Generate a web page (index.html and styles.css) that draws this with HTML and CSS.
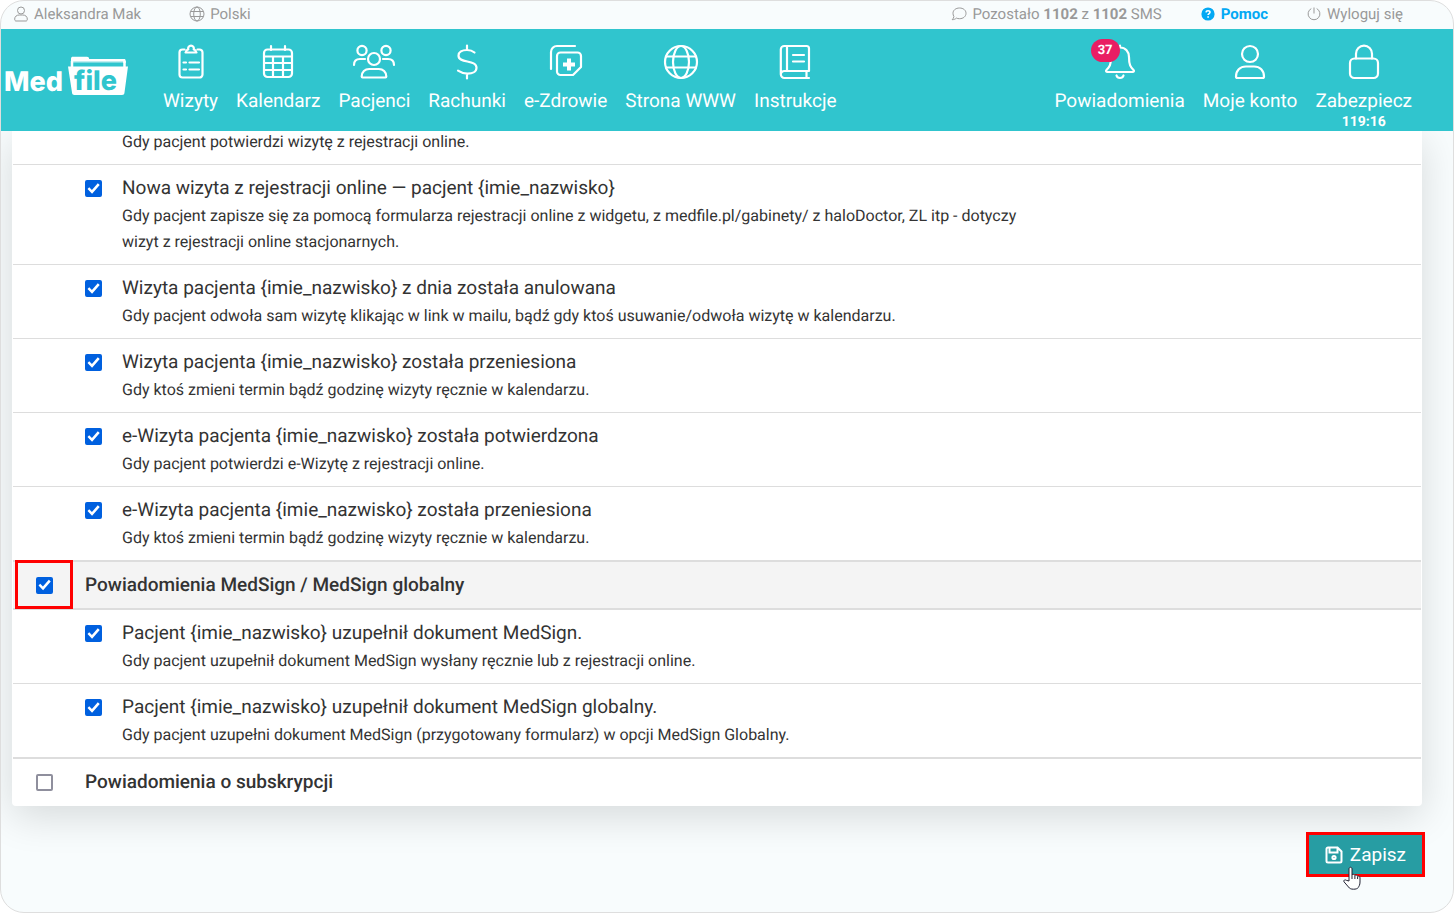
FILE: index.html
```
<!DOCTYPE html>
<html lang="pl">
<head>
<meta charset="utf-8">
<title>MedFile – Powiadomienia</title>
<link rel="stylesheet" href="styles.css">
</head>
<body>
<div class="app">
  <div class="topbar">
    <a class="topbar-link" href="#">
      <svg class="icon-sm" viewBox="0 0 16 16"><circle cx="8" cy="4.500" r="3.500"/><path d="M1.700 13c0-2.500 2-4 4.500-4h3.600c2.500 0 4.500 1.500 4.500 4 0 1.300-.4 2-1.300 2H3c-.9 0-1.300-.7-1.300-2z"/></svg>
      <span>Aleksandra Mak</span>
    </a>
    <a class="topbar-link topbar-lang" href="#">
      <svg class="icon-sm" viewBox="0 0 16 16"><circle cx="8" cy="8" r="7"/><ellipse cx="8" cy="8" rx="3.300" ry="7"/><path d="M1.600 5.500h12.800M1.600 10.500h12.800"/></svg>
      <span>Polski</span>
    </a>
    <div class="topbar-right">
      <span class="topbar-link">
        <svg class="icon-sm" viewBox="0 0 16 16"><path d="M8.500 2C12.300 2 15 4.200 15 7.300s-2.700 5.400-6.500 5.400c-1.200 0-2.200-.2-3.100-.6-.9.800-2.300 1.600-4.200 1.600.9-.9 1.500-2 1.700-3.100C2.300 9.600 2 8.500 2 7.300 2 4.200 4.700 2 8.500 2z"/></svg>
        <span>Pozostało <b>1102</b> z <b>1102</b> SMS</span>
      </span>
      <a class="topbar-link topbar-help" href="#">
        <svg class="icon-sm" viewBox="0 0 16 16"><circle class="help-disc" cx="8" cy="8" r="6.600"/><path class="help-mark" d="M6 6.400c.1-1.200 1-1.700 2-1.700s2 .6 2 1.600c0 1.300-1.900 1.200-1.900 2.600M8.100 10.300v1.500"/></svg>
        <span>Pomoc</span>
      </a>
      <a class="topbar-link" href="#">
        <svg class="icon-sm" viewBox="0 0 16 16"><path d="M8 1.500v6M5.300 2.600a5.900 5.900 0 1 0 5.400 0"/></svg>
        <span>Wyloguj się</span>
      </a>
    </div>
  </div>

  <header class="header">
    <a class="logo" href="#" aria-label="MedFile">
      <svg class="logo-art" width="124" height="40" viewBox="0 0 124 40">
        <text class="logo-med" x="0" y="35">Med</text>
        <path class="logo-folder" d="M64 10.500h60l-3.500 26c-.2 1.800-1 2.500-2.500 2.500H70.500c-1.500 0-2.300-.7-2.500-2.500z"/>
        <path class="logo-tab" d="M68 11V5M120.500 11V5"/>
        <path class="logo-rim" d="M67.500 5.500h53.500"/>
        <path class="logo-folder" d="M67 7V3c0-1.700.7-2.300 2-2.300h14c1.300 0 2 .7 2.200 2.300H120c1.200 0 1.700.5 1.700 1.700V7h-2.200V5H69v2z"/>
        <text class="logo-file" x="70" y="34">file</text>
      </svg>
    </a>
    <nav class="nav">
      <a class="nav-item" href="#">
        <svg class="icon" viewBox="0 0 36 36"><path d="M11.500 5.500H9.500a3 3 0 0 0-3 3v22a3 3 0 0 0 3 3h17a3 3 0 0 0 3-3v-22a3 3 0 0 0-3-3h-2M12.500 8.500h11M13 8.500c0-2 1-2.800 2.300-3a2.900 2.900 0 1 1 5.400 0c1.300.2 2.300 1 2.300 3M16.500 18.500h9.500M16.500 25.500h9.500M10.500 18.500h2.500M10.500 25.500h2.500"/></svg>
        <span>Wizyty</span>
      </a>
      <a class="nav-item" href="#">
        <svg class="icon" viewBox="0 0 36 36"><rect x="4" y="5.500" width="28" height="27.500" rx="3.500"/><path d="M4 12.500h28M11 2v4M25 2v4M4 19h28M4 26h28M13 12.500V33M23 12.500V33"/></svg>
        <span>Kalendarz</span>
      </a>
      <a class="nav-item" href="#">
        <svg class="icon icon-wide" viewBox="0 0 44 36"><circle cx="10" cy="6.500" r="4.600"/><circle cx="34" cy="6.500" r="4.600"/><circle cx="22" cy="15" r="6"/><path d="M10.500 33.500c-.6 0-.8-.3-.8-1 0-4.500 3.300-7.500 7.500-7.500h9.600c4.200 0 7.500 3 7.500 7.500 0 .7-.2 1-.8 1zM2 21c0-4 2-6 6-6h5M42 21c0-4-2-6-6-6h-5"/></svg>
        <span>Pacjenci</span>
      </a>
      <a class="nav-item" href="#">
        <svg class="icon" viewBox="0 0 36 36"><path d="M18 1.500V6M18 29.500v5M25.500 8.500C23.500 6.800 21 6 18 6c-5 0-8.500 2.200-8.500 5.700 0 8 18 3.600 18 12 0 3.800-3.800 6-9 6-3.500 0-6.500-1-9.500-3"/></svg>
        <span>Rachunki</span>
      </a>
      <a class="nav-item" href="#">
        <svg class="icon" viewBox="0 0 36 36"><path d="M3 25V8a6 6 0 0 1 6-6h18M12.500 8.500h17a3.500 3.500 0 0 1 3.500 3.500v11l-8 8H12.500A3.500 3.500 0 0 1 9 27.500V12a3.500 3.500 0 0 1 3.500-3.500z"/><path class="cross" d="M21 14.500v12M15 20.500h12"/></svg>
        <span>e-Zdrowie</span>
      </a>
      <a class="nav-item" href="#">
        <svg class="icon" viewBox="0 0 36 36"><circle cx="18" cy="18" r="16"/><ellipse cx="18" cy="18" rx="8" ry="16"/><path d="M3 12.500h30M3 23.500h30"/></svg>
        <span>Strona WWW</span>
      </a>
      <a class="nav-item" href="#">
        <svg class="icon" viewBox="0 0 36 36"><path d="M32 34H7.500a3.700 3.700 0 0 1-3.700-3.700V5.500A3.500 3.500 0 0 1 7.300 2H29.500A2.500 2.500 0 0 1 32 4.500V27H7.500a3.500 3.500 0 0 0-3.700 3.500M29.500 27v7M10 2v25M16 11h11M16 17.500h11"/></svg>
        <span>Instrukcje</span>
      </a>
    </nav>
    <nav class="nav nav-right">
      <a class="nav-item" href="#">
        <span class="bell">
          <svg class="icon" viewBox="0 0 36 36"><path d="M18 1.500v2M18 3.500c-5.500 0-9 4-9 9.500 0 8-1.500 10-4.500 13-.9 1-.5 2 1 2h25c1.500 0 1.900-1 1-2-3-3-4.500-5-4.500-13 0-5.500-3.500-9.500-9-9.500zM14.500 31.500c.5 1.700 1.900 2.500 3.500 2.500s3-.8 3.500-2.500"/></svg>
          <span class="badge">37</span>
        </span>
        <span>Powiadomienia</span>
      </a>
      <a class="nav-item" href="#">
        <svg class="icon" viewBox="0 0 36 36"><circle cx="18" cy="10" r="8"/><path d="M5.500 34c-1 0-1.500-.5-1.500-1.500C4 26.500 8 22.500 14 22.500h8c6 0 10 4 10 10 0 1-.5 1.500-1.500 1.500z"/></svg>
        <span>Moje konto</span>
      </a>
      <a class="nav-item" href="#">
        <svg class="icon" viewBox="0 0 36 36"><rect x="4" y="14.500" width="28" height="19.500" rx="4.500"/><path d="M10 14.500V9.700a8 8 0 0 1 16 0v4.800"/></svg>
        <span>Zabezpiecz</span>
        <b class="timer">119:16</b>
      </a>
    </nav>
  </header>

  <main class="content">
    <form class="form">
      <div class="card">
        <div class="row row-cut">
          <p class="desc">Gdy pacjent potwierdzi wizytę z rejestracji online.</p>
        </div>
        <div class="row">
          <input class="check" type="checkbox" id="n1" checked>
          <div class="row-text">
            <label class="title" for="n1">Nowa wizyta z rejestracji online — pacjent {imie_nazwisko}</label>
            <p class="desc">Gdy pacjent zapisze się za pomocą formularza rejestracji online z widgetu, z medfile.pl/gabinety/ z haloDoctor, ZL itp - dotyczy wizyt z rejestracji online stacjonarnych.</p>
          </div>
        </div>
        <div class="row">
          <input class="check" type="checkbox" id="n2" checked>
          <div class="row-text">
            <label class="title" for="n2">Wizyta pacjenta {imie_nazwisko} z dnia została anulowana</label>
            <p class="desc">Gdy pacjent odwoła sam wizytę klikając w link w mailu, bądź gdy ktoś usuwanie/odwoła wizytę w kalendarzu.</p>
          </div>
        </div>
        <div class="row">
          <input class="check" type="checkbox" id="n3" checked>
          <div class="row-text">
            <label class="title" for="n3">Wizyta pacjenta {imie_nazwisko} została przeniesiona</label>
            <p class="desc">Gdy ktoś zmieni termin bądź godzinę wizyty ręcznie w kalendarzu.</p>
          </div>
        </div>
        <div class="row">
          <input class="check" type="checkbox" id="n4" checked>
          <div class="row-text">
            <label class="title" for="n4">e-Wizyta pacjenta {imie_nazwisko} została potwierdzona</label>
            <p class="desc">Gdy pacjent potwierdzi e-Wizytę z rejestracji online.</p>
          </div>
        </div>
        <div class="row">
          <input class="check" type="checkbox" id="n5" checked>
          <div class="row-text">
            <label class="title" for="n5">e-Wizyta pacjenta {imie_nazwisko} została przeniesiona</label>
            <p class="desc">Gdy ktoś zmieni termin bądź godzinę wizyty ręcznie w kalendarzu.</p>
          </div>
        </div>
        <div class="group group-active">
          <input class="check" type="checkbox" id="g1" checked>
          <label class="group-title" for="g1">Powiadomienia MedSign / MedSign globalny</label>
          <span class="marker"></span>
        </div>
        <div class="row row-first">
          <input class="check" type="checkbox" id="n6" checked>
          <div class="row-text">
            <label class="title" for="n6">Pacjent {imie_nazwisko} uzupełnił dokument MedSign.</label>
            <p class="desc">Gdy pacjent uzupełnił dokument MedSign wysłany ręcznie lub z rejestracji online.</p>
          </div>
        </div>
        <div class="row">
          <input class="check" type="checkbox" id="n7" checked>
          <div class="row-text">
            <label class="title" for="n7">Pacjent {imie_nazwisko} uzupełnił dokument MedSign globalny.</label>
            <p class="desc">Gdy pacjent uzupełni dokument MedSign (przygotowany formularz) w opcji MedSign Globalny.</p>
          </div>
        </div>
        <div class="group">
          <input class="check" type="checkbox" id="g2">
          <label class="group-title" for="g2">Powiadomienia o subskrypcji</label>
        </div>
      </div>
      <div class="actions">
        <button class="save" type="button">
          <svg class="save-icon" viewBox="0 0 18 18"><path d="M3 1.500h9.500l4 4V15a1.500 1.500 0 0 1-1.500 1.500H3A1.500 1.500 0 0 1 1.500 15V3A1.500 1.500 0 0 1 3 1.500zM4.500 2v4.500h8V2"/><circle cx="9" cy="11.500" r="1.600"/></svg>
          <span>Zapisz</span>
          <svg class="pointer" viewBox="0 0 18 24"><path d="M6 15V3c0-2.300 3-2.300 3 0v6c.3-1 2.700-1 2.900.6.500-1 2.500-.7 2.700.8.700-.7 2.400-.2 2.400 1.400V16c0 3-1 4-1.700 5.500-1 1.300-2.600 1.700-4.800 1.700-2.500 0-4-.7-5-2.200L1 15.800c-.8-1.500 1-2.600 2.300-1.500z"/><path d="M9 9v4M11.900 9.800V13M14.600 10.800V13"/></svg>
        </button>
      </div>
    </form>
  </main>
</div>
</body>
</html>
```
FILE: styles.css
```
* {
  box-sizing: border-box;
}

body {
  margin: 0;
  background: #fff;
  color: #333;
  font-family: Roboto, "Liberation Sans", sans-serif;
  font-size: 16px;
  text-rendering: geometricPrecision;
}

a {
  color: inherit;
  text-decoration: none;
}

.app {
  display: flex;
  flex-direction: column;
  min-height: 100vh;
  overflow: hidden;
  border: 1px solid #dedede;
  border-radius: 24px;
  background: #f8fcfd;
}

/* Top bar */
.topbar {
  display: flex;
  align-items: center;
  height: 28px;
  padding: 0 50px 3px 12px;
  color: #999;
  font-size: 15px;
}

.topbar-link {
  display: flex;
  align-items: center;
  gap: 5px;
  white-space: nowrap;
}

.topbar-lang {
  margin-left: 48px;
}

.topbar-right {
  display: flex;
  gap: 38px;
  margin-left: auto;
}

.topbar-help {
  color: #03a9f4;
  font-weight: 700;
}

.icon-sm {
  width: 16px;
  height: 16px;
  fill: none;
  stroke: currentColor;
  stroke-width: 1;
}

.help-disc {
  fill: #03a9f4;
  stroke: none;
}

.help-mark {
  stroke: #fff;
  stroke-width: 1.600;
}

/* Header */
.header {
  position: relative;
  z-index: 1;
  display: flex;
  align-items: flex-start;
  height: 102px;
  padding: 15px 41px 0 3px;
  background: #30c5ce;
  color: #fff;
}

.logo {
  margin-top: 12px;
}

.logo-art {
  display: block;
}

.logo-med,
.logo-file {
  font-family: Inter, Roboto, sans-serif;
  font-size: 27px;
  font-weight: 800;
}

.logo-med,
.logo-folder {
  fill: #fff;
}

.logo-file {
  fill: #30c5ce;
}

.logo-tab {
  fill: none;
  stroke: #fff;
  stroke-width: 2.500;
}

.logo-rim {
  fill: none;
  stroke: #fff;
  stroke-width: 2;
  opacity: 0.7;
}

.nav {
  display: flex;
  gap: 18px;
  margin-left: 35px;
}

.nav-right {
  margin-left: auto;
}

.nav-item {
  display: flex;
  flex-direction: column;
  align-items: center;
  font-size: 19px;
  line-height: 22px;
  white-space: nowrap;
}

.icon {
  display: block;
  width: 36px;
  height: 36px;
  margin-bottom: 10px;
  fill: none;
  stroke: currentColor;
  stroke-width: 2.200;
  stroke-linecap: round;
  stroke-linejoin: round;
}

.icon-wide {
  width: 44px;
}

.cross {
  stroke-width: 4;
  stroke-linecap: butt;
}

.bell {
  position: relative;
}

.badge {
  position: absolute;
  top: -5px;
  left: -11px;
  width: 29px;
  border-radius: 12px;
  background: #e91e63;
  font-size: 13px;
  font-weight: 700;
  line-height: 23px;
  text-align: center;
}

.timer {
  font-size: 14px;
  line-height: 20px;
}

/* List */
.content {
  flex: 1;
  padding: 0 31px 0 11px;
}

.card {
  padding: 0 1px 1px;
  border-radius: 0 0 4px 4px;
  background: #fff;
  box-shadow: 0 10px 40px rgba(0, 0, 0, 0.14);
}

.row {
  display: flex;
  align-items: flex-start;
  gap: 20px;
  padding: 8px 72px 9px;
  border-top: 1px solid #ddd;
}

.row-cut {
  padding: 0 109px 11px;
  border-top: 0;
}

.row-cut .desc {
  line-height: 22px;
}

.row-first {
  border-top: 0;
}

.row-text {
  flex: 1;
}

.title {
  display: block;
  font-size: 19px;
  line-height: 30px;
}

.desc {
  max-width: 900px;
  margin: 0;
  font-size: 16px;
  line-height: 26px;
}

.check {
  display: grid;
  flex: none;
  width: 17px;
  height: 17px;
  margin: 7px 0 0;
  border: 2px solid #8f8f9d;
  border-radius: 2px;
  background: #fff;
  appearance: none;
}

.check:checked {
  border-color: #0060df;
  background: #0060df;
}

.check:checked::before {
  content: "";
  background: #fff;
  clip-path: polygon(4% 53%, 17% 40%, 38% 61%, 83% 10%, 98% 23%, 39% 91%);
}

.group {
  position: relative;
  display: flex;
  align-items: center;
  gap: 32px;
  padding: 8px 23px;
  border-top: 2px solid #ddd;
}

.group-active {
  border-bottom: 2px solid #ddd;
  background: #f4f4f4;
}

.group .check {
  margin: 0;
}

.group-title {
  font-size: 19px;
  font-weight: 500;
  line-height: 30px;
}

.marker {
  position: absolute;
  top: -2px;
  bottom: -1px;
  left: 2px;
  width: 58px;
  border: 3px solid #f00;
}

/* Actions */
.actions {
  display: flex;
  justify-content: flex-end;
  padding: 29px 0 36px;
}

.save {
  position: relative;
  display: flex;
  align-items: center;
  gap: 7px;
  padding: 4px 16px;
  border: 0;
  outline: 3px solid #f00;
  background: #279da3;
  color: #fff;
  font-family: inherit;
  font-size: 19px;
  line-height: 31px;
}

.save-icon {
  width: 18px;
  height: 18px;
  fill: none;
  stroke: currentColor;
  stroke-width: 2;
}

.pointer {
  position: absolute;
  top: 31px;
  left: 34px;
  width: 18px;
  height: 24px;
  fill: #fff;
  stroke: #223;
  stroke-width: 1;
}
```
